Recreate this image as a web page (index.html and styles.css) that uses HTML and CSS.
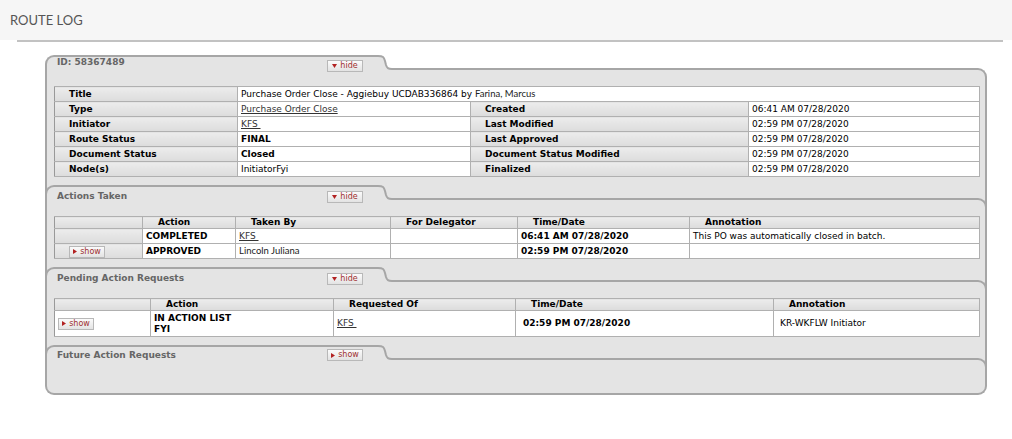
FILE: index.html
```html
<!DOCTYPE html>
<html>
<head>
<meta charset="utf-8">
<title>Route Log</title>
<link rel="stylesheet" href="styles.css">
</head>
<body>
<header class="page-head"><h1 class="page-title">ROUTE LOG</h1></header>
<div class="page-rule"></div>

<div class="routelog">
  <section class="tab">
    <div class="tab-head">
      <div class="tab-left"><span class="tab-title">ID: 58367489</span><button class="tog"><svg class="tri" width="5" height="4" viewBox="0 0 5 4"><path d="M0,0 H5 L2.5,4 Z"/></svg>hide</button></div>
      <svg class="tab-curve" width="14" height="24" viewBox="0 0 14 24"><path class="cf" d="M0,1 C5,1 6,2 7,6 L8,10 C9,13 10,14 14,14 L14,24 L0,24 Z"/><path class="cl" d="M0,1 C5,1 6,2 7,6 L8,10 C9,13 10,14 14,14"/></svg>
      <div class="tab-right"></div>
    </div>
    <div class="tab-body">
      <table class="grid info">
        <colgroup><col style="width:183px"><col style="width:233px"><col style="width:278px"><col style="width:231px"></colgroup>
        <tr><th class="lbl">Title</th><td colspan="3">Purchase Order Close - Aggiebuy UCDAB336864 by <span class="lato">Farina, Marcus</span></td></tr>
        <tr><th class="lbl">Type</th><td><a class="lnk" href="#">Purchase Order Close</a></td><th class="lbl">Created</th><td>06:41 AM 07/28/2020</td></tr>
        <tr><th class="lbl">Initiator</th><td><a class="lnk" href="#">KFS&nbsp;</a></td><th class="lbl">Last Modified</th><td>02:59 PM 07/28/2020</td></tr>
        <tr><th class="lbl">Route Status</th><td><b>FINAL</b></td><th class="lbl">Last Approved</th><td>02:59 PM 07/28/2020</td></tr>
        <tr><th class="lbl">Document Status</th><td><b>Closed</b></td><th class="lbl">Document Status Modified</th><td>02:59 PM 07/28/2020</td></tr>
        <tr><th class="lbl">Node(s)</th><td>InitiatorFyi</td><th class="lbl">Finalized</th><td>02:59 PM 07/28/2020</td></tr>
      </table>
    </div>
  </section>

  <section class="tab">
    <div class="tab-head">
      <div class="tab-left"><span class="tab-title">Actions Taken</span><button class="tog"><svg class="tri" width="5" height="4" viewBox="0 0 5 4"><path d="M0,0 H5 L2.5,4 Z"/></svg>hide</button></div>
      <svg class="tab-curve" width="14" height="24" viewBox="0 0 14 24"><path class="cf" d="M0,1 C5,1 6,2 7,6 L8,10 C9,13 10,14 14,14 L14,24 L0,24 Z"/><path class="cl" d="M0,1 C5,1 6,2 7,6 L8,10 C9,13 10,14 14,14"/></svg>
      <div class="tab-right"></div>
    </div>
    <div class="tab-body">
      <table class="grid list">
        <colgroup><col style="width:88px"><col style="width:93px"><col style="width:155px"><col style="width:127px"><col style="width:172px"><col style="width:290px"></colgroup>
        <tr class="hdr"><th></th><th>Action</th><th>Taken By</th><th>For Delegator</th><th>Time/Date</th><th>Annotation</th></tr>
        <tr><th class="side"></th><td><b>COMPLETED</b></td><td><a class="lnk" href="#">KFS&nbsp;</a></td><td></td><td><b>06:41 AM 07/28/2020</b></td><td>This PO was automatically closed in batch.</td></tr>
        <tr><th class="side side-btn"><button class="tog"><svg class="tri" width="4" height="5" viewBox="0 0 4 5"><path d="M0,0 L4,2.5 L0,5 Z"/></svg>show</button></th><td><b>APPROVED</b></td><td><span class="lato">Lincoln Juliana</span></td><td></td><td><b>02:59 PM 07/28/2020</b></td><td></td></tr>
      </table>
    </div>
  </section>

  <section class="tab">
    <div class="tab-head">
      <div class="tab-left"><span class="tab-title">Pending Action Requests</span><button class="tog"><svg class="tri" width="5" height="4" viewBox="0 0 5 4"><path d="M0,0 H5 L2.5,4 Z"/></svg>hide</button></div>
      <svg class="tab-curve" width="14" height="24" viewBox="0 0 14 24"><path class="cf" d="M0,1 C5,1 6,2 7,6 L8,10 C9,13 10,14 14,14 L14,24 L0,24 Z"/><path class="cl" d="M0,1 C5,1 6,2 7,6 L8,10 C9,13 10,14 14,14"/></svg>
      <div class="tab-right"></div>
    </div>
    <div class="tab-body">
      <table class="grid list pending">
        <colgroup><col style="width:96px"><col style="width:183px"><col style="width:182px"><col style="width:258px"><col style="width:206px"></colgroup>
        <tr class="hdr"><th></th><th>Action</th><th>Requested Of</th><th>Time/Date</th><th>Annotation</th></tr>
        <tr class="tall"><td class="btn-cell"><button class="tog"><svg class="tri" width="4" height="5" viewBox="0 0 4 5"><path d="M0,0 L4,2.5 L0,5 Z"/></svg>show</button></td><td class="two"><b>IN ACTION LIST<br>FYI</b></td><td><a class="lnk" href="#">KFS&nbsp;</a></td><td class="pad7"><b>02:59 PM 07/28/2020</b></td><td class="pad6">KR-WKFLW Initiator</td></tr>
      </table>
    </div>
  </section>

  <section class="tab last">
    <div class="tab-head">
      <div class="tab-left"><span class="tab-title">Future Action Requests</span><button class="tog"><svg class="tri" width="4" height="5" viewBox="0 0 4 5"><path d="M0,0 L4,2.5 L0,5 Z"/></svg>show</button></div>
      <svg class="tab-curve" width="14" height="24" viewBox="0 0 14 24"><path class="cf" d="M0,1 C5,1 6,2 7,6 L8,10 C9,13 10,14 14,14 L14,24 L0,24 Z"/><path class="cl" d="M0,1 C5,1 6,2 7,6 L8,10 C9,13 10,14 14,14"/></svg>
      <div class="tab-right"></div>
    </div>
    <div class="tab-body"></div>
  </section>
</div>
</body>
</html>
```

FILE: styles.css
```css
* { box-sizing: border-box; }

body {
  margin: 0;
  background: #fff;
  font-family: "DejaVu Sans", Verdana, sans-serif;
  font-size: 9px;
  color: #000;
}

.page-head {
  height: 40px;
  background: #f6f6f6;
  padding-left: 10px;
}

.page-title {
  margin: 0;
  font: 400 13px/40px Lato, "Open Sans", sans-serif;
  color: #555;
}

.page-rule {
  height: 2px;
  background: #c2c2c2;
  margin: 0 9px 0 17px;
}

.routelog {
  width: 942px;
  margin: 13px 0 0 45px;
}

.tab-head {
  display: flex;
  height: 24px;
}

.tab + .tab .tab-head {
  background: #e4e4e4;
  box-shadow: inset 2px 0 0 #a6a6a6, inset -2px 0 0 #a6a6a6;
}

.tab-left {
  width: 333px;
  display: flex;
  align-items: flex-start;
  padding: 0 15px 0 10px;
  background: #e4e4e4;
  border-top: 2px solid #a6a6a6;
  border-left: 2px solid #a6a6a6;
  border-top-left-radius: 9px;
}

.tab-title {
  flex: 1;
  font-weight: bold;
  color: #666;
  line-height: 11px;
}

.tab + .tab .tab-title { padding-top: 4px; }
.tab + .tab .tab-left .tog { margin-top: 4px; }
.tab.last .tab-left .tog { margin-top: 2px; }
.tab.last .tab-title { padding-top: 3px; }

.tab-curve {
  display: block;
  flex: none;
}

.tab-curve .cf { fill: #e4e4e4; }
.tab-curve .cl { fill: none; stroke: #a6a6a6; stroke-width: 2; }

.tab-right {
  flex: 1;
  margin-top: 13px;
  background: #e4e4e4;
  border-top: 2px solid #a6a6a6;
  border-right: 2px solid #a6a6a6;
  border-top-right-radius: 9px;
}

.tab-body {
  background: #e4e4e4;
  border-left: 2px solid #a6a6a6;
  border-right: 2px solid #a6a6a6;
  padding: 7px 6px 8px 7px;
}

.tab.last .tab-body {
  height: 26px;
  border-bottom: 2px solid #a6a6a6;
  border-bottom-left-radius: 9px;
  border-bottom-right-radius: 9px;
}

.tog {
  display: flex;
  align-items: center;
  justify-content: center;
  gap: 3px;
  width: 36px;
  height: 12px;
  margin: 3px 0 0;
  padding: 0;
  border: 1px solid #b8b8b8;
  background: linear-gradient(#fbfbfb, #e3e3e3);
  color: #9e2f2f;
  font: 8px/10px "DejaVu Sans", Verdana, sans-serif;
}

.tri { display: block; fill: #b22222; }

.grid {
  width: 925px;
  table-layout: fixed;
  border-collapse: collapse;
}

.grid th,
.grid td {
  border: 1px solid #b0b0b0;
  height: 15px;
  padding: 0 3px;
  line-height: 13px;
  text-align: left;
  white-space: nowrap;
  overflow: hidden;
  vertical-align: middle;
}

.grid td { background: #fff; }
.grid tr > :first-child { border-left-color: #999; }

.grid th {
  background: linear-gradient(#ececec, #dcdcdc);
  font-weight: bold;
}

.info .lbl { padding-left: 14px; }
.info td { padding-left: 3px; }

.list .hdr th {
  height: 12px;
  line-height: 11px;
  padding-left: 15px;
}

.grid .side-btn { padding-left: 14px; }
.grid .side-btn .tog { margin: 1px 0 0; }

.pending .tall td { height: 26px; }
.pending .two { line-height: 11px; }
.pending .pad7 { padding-left: 7px; }
.pending .pad6 { padding-left: 6px; }
.grid .btn-cell .tog { margin: 0; }

.lnk { color: #333; text-decoration: underline; }

.lato {
  font-family: Lato, "Open Sans", sans-serif;
  font-size: 9.5px;
  color: #222;
}
```
